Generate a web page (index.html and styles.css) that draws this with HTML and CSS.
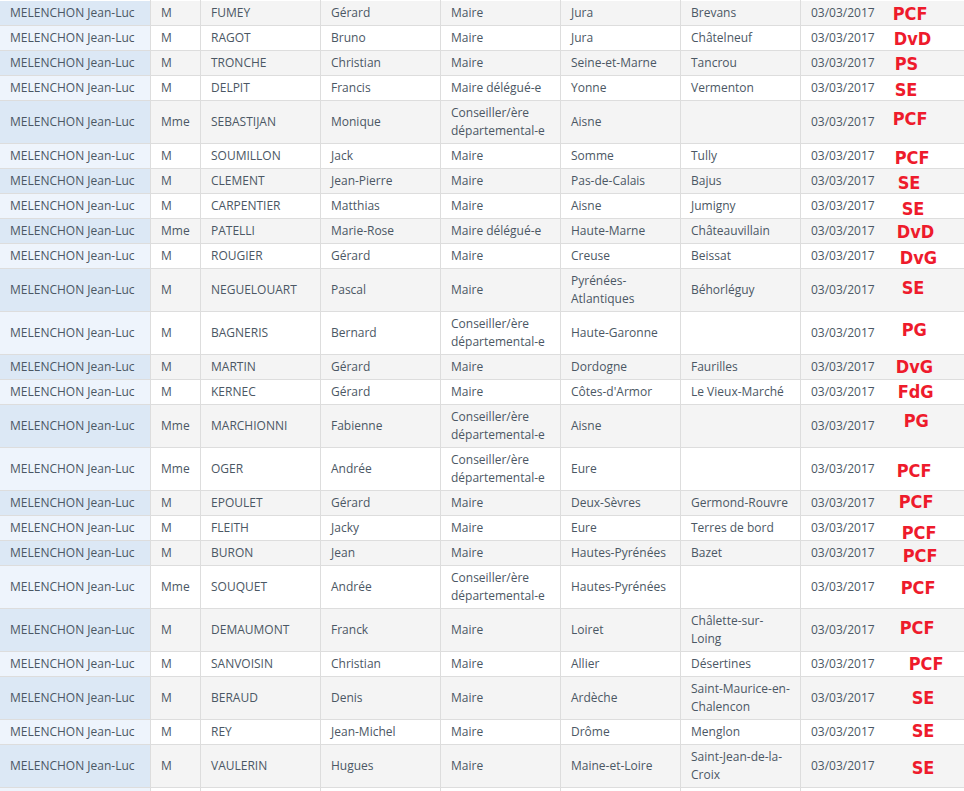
FILE: index.html
```html
<!DOCTYPE html>
<html lang="fr">
<head>
<meta charset="utf-8">
<title>Parrainages</title>
<link rel="stylesheet" href="styles.css">
</head>
<body>
<table class="grid">
<colgroup>
<col class="c-cand"><col class="c-civ"><col class="c-nom"><col class="c-prenom"><col class="c-mandat"><col class="c-dep"><col class="c-com"><col class="c-date">
</colgroup>
<tbody>
<tr><td class="cand">MELENCHON Jean-Luc</td><td>M</td><td>FUMEY</td><td>Gérard</td><td>Maire</td><td>Jura</td><td>Brevans</td><td class="date">03/03/2017<span class="tag" style="--dx:0px;--dy:0px">PCF</span></td></tr>
<tr><td class="cand">MELENCHON Jean-Luc</td><td>M</td><td>RAGOT</td><td>Bruno</td><td>Maire</td><td>Jura</td><td>Châtelneuf</td><td class="date">03/03/2017<span class="tag" style="--dx:1px;--dy:0px">DvD</span></td></tr>
<tr><td class="cand">MELENCHON Jean-Luc</td><td>M</td><td>TRONCHE</td><td>Christian</td><td>Maire</td><td>Seine-et-Marne</td><td>Tancrou</td><td class="date">03/03/2017<span class="tag" style="--dx:2px;--dy:0px">PS</span></td></tr>
<tr><td class="cand">MELENCHON Jean-Luc</td><td>M</td><td>DELPIT</td><td>Francis</td><td>Maire délégué-e</td><td>Yonne</td><td>Vermenton</td><td class="date">03/03/2017<span class="tag" style="--dx:2px;--dy:1px">SE</span></td></tr>
<tr><td class="cand">MELENCHON Jean-Luc</td><td>Mme</td><td>SEBASTIJAN</td><td>Monique</td><td>Conseiller/ère départemental-e</td><td>Aisne</td><td></td><td class="date">03/03/2017<span class="tag" style="--dx:0px;--dy:-4px">PCF</span></td></tr>
<tr><td class="cand">MELENCHON Jean-Luc</td><td>M</td><td>SOUMILLON</td><td>Jack</td><td>Maire</td><td>Somme</td><td>Tully</td><td class="date">03/03/2017<span class="tag" style="--dx:2px;--dy:1px">PCF</span></td></tr>
<tr><td class="cand">MELENCHON Jean-Luc</td><td>M</td><td>CLEMENT</td><td>Jean-Pierre</td><td>Maire</td><td>Pas-de-Calais</td><td>Bajus</td><td class="date">03/03/2017<span class="tag" style="--dx:5px;--dy:1px">SE</span></td></tr>
<tr><td class="cand">MELENCHON Jean-Luc</td><td>M</td><td>CARPENTIER</td><td>Matthias</td><td>Maire</td><td>Aisne</td><td>Jumigny</td><td class="date">03/03/2017<span class="tag" style="--dx:9px;--dy:2px">SE</span></td></tr>
<tr><td class="cand">MELENCHON Jean-Luc</td><td>Mme</td><td>PATELLI</td><td>Marie-Rose</td><td>Maire délégué-e</td><td>Haute-Marne</td><td>Châteauvillain</td><td class="date">03/03/2017<span class="tag" style="--dx:4px;--dy:0px">DvD</span></td></tr>
<tr><td class="cand">MELENCHON Jean-Luc</td><td>M</td><td>ROUGIER</td><td>Gérard</td><td>Maire</td><td>Creuse</td><td>Beissat</td><td class="date">03/03/2017<span class="tag" style="--dx:7px;--dy:1px">DvG</span></td></tr>
<tr><td class="cand">MELENCHON Jean-Luc</td><td>M</td><td>NEGUELOUART</td><td>Pascal</td><td>Maire</td><td>Pyrénées-Atlantiques</td><td>Béhorléguy</td><td class="date">03/03/2017<span class="tag" style="--dx:9px;--dy:-3px">SE</span></td></tr>
<tr><td class="cand">MELENCHON Jean-Luc</td><td>M</td><td>BAGNERIS</td><td>Bernard</td><td>Conseiller/ère départemental-e</td><td>Haute-Garonne</td><td></td><td class="date">03/03/2017<span class="tag" style="--dx:9px;--dy:-4px">PG</span></td></tr>
<tr><td class="cand">MELENCHON Jean-Luc</td><td>M</td><td>MARTIN</td><td>Gérard</td><td>Maire</td><td>Dordogne</td><td>Faurilles</td><td class="date">03/03/2017<span class="tag" style="--dx:3px;--dy:-1px">DvG</span></td></tr>
<tr><td class="cand">MELENCHON Jean-Luc</td><td>M</td><td>KERNEC</td><td>Gérard</td><td>Maire</td><td>Côtes-d'Armor</td><td>Le Vieux-Marché</td><td class="date">03/03/2017<span class="tag" style="--dx:5px;--dy:-1px">FdG</span></td></tr>
<tr><td class="cand">MELENCHON Jean-Luc</td><td>Mme</td><td>MARCHIONNI</td><td>Fabienne</td><td>Conseiller/ère départemental-e</td><td>Aisne</td><td></td><td class="date">03/03/2017<span class="tag" style="--dx:11px;--dy:-6px">PG</span></td></tr>
<tr><td class="cand">MELENCHON Jean-Luc</td><td>Mme</td><td>OGER</td><td>Andrée</td><td>Conseiller/ère départemental-e</td><td>Eure</td><td></td><td class="date">03/03/2017<span class="tag" style="--dx:4px;--dy:1px">PCF</span></td></tr>
<tr><td class="cand">MELENCHON Jean-Luc</td><td>M</td><td>EPOULET</td><td>Gérard</td><td>Maire</td><td>Deux-Sèvres</td><td>Germond-Rouvre</td><td class="date">03/03/2017<span class="tag" style="--dx:6px;--dy:-2px">PCF</span></td></tr>
<tr><td class="cand">MELENCHON Jean-Luc</td><td>M</td><td>FLEITH</td><td>Jacky</td><td>Maire</td><td>Eure</td><td>Terres de bord</td><td class="date">03/03/2017<span class="tag" style="--dx:9px;--dy:4px">PCF</span></td></tr>
<tr><td class="cand">MELENCHON Jean-Luc</td><td>M</td><td>BURON</td><td>Jean</td><td>Maire</td><td>Hautes-Pyrénées</td><td>Bazet</td><td class="date">03/03/2017<span class="tag" style="--dx:10px;--dy:2px">PCF</span></td></tr>
<tr><td class="cand">MELENCHON Jean-Luc</td><td>Mme</td><td>SOUQUET</td><td>Andrée</td><td>Conseiller/ère départemental-e</td><td>Hautes-Pyrénées</td><td></td><td class="date">03/03/2017<span class="tag" style="--dx:8px;--dy:0px">PCF</span></td></tr>
<tr><td class="cand">MELENCHON Jean-Luc</td><td>M</td><td>DEMAUMONT</td><td>Franck</td><td>Maire</td><td>Loiret</td><td>Châlette-sur-Loing</td><td class="date">03/03/2017<span class="tag" style="--dx:7px;--dy:-3px">PCF</span></td></tr>
<tr><td class="cand">MELENCHON Jean-Luc</td><td>M</td><td>SANVOISIN</td><td>Christian</td><td>Maire</td><td>Allier</td><td>Désertines</td><td class="date">03/03/2017<span class="tag" style="--dx:16px;--dy:-1px">PCF</span></td></tr>
<tr><td class="cand">MELENCHON Jean-Luc</td><td>M</td><td>BERAUD</td><td>Denis</td><td>Maire</td><td>Ardèche</td><td>Saint-Maurice-en-Chalencon</td><td class="date">03/03/2017<span class="tag" style="--dx:19px;--dy:-1px">SE</span></td></tr>
<tr><td class="cand">MELENCHON Jean-Luc</td><td>M</td><td>REY</td><td>Jean-Michel</td><td>Maire</td><td>Drôme</td><td>Menglon</td><td class="date">03/03/2017<span class="tag" style="--dx:19px;--dy:-2px">SE</span></td></tr>
<tr><td class="cand">MELENCHON Jean-Luc</td><td>M</td><td>VAULERIN</td><td>Hugues</td><td>Maire</td><td>Maine-et-Loire</td><td>Saint-Jean-de-la-Croix</td><td class="date">03/03/2017<span class="tag" style="--dx:19px;--dy:1px">SE</span></td></tr>
<tr class="edge"><td class="cand"></td><td></td><td></td><td></td><td></td><td></td><td></td><td class="date"></td></tr>
</tbody>
</table>
</body>
</html>
```

FILE: styles.css
```css
html, body {
  margin: 0;
  padding: 0;
  overflow: hidden;
  background: #fff;
}

.grid {
  border-collapse: collapse;
  table-layout: fixed;
  width: 1001px;
  margin-left: -1px;
  font-family: "Open Sans", "Liberation Sans", sans-serif;
  font-size: 12px;
  line-height: 18px;
  color: #4b5764;
}

.c-cand { width: 151px; }
.c-civ { width: 50px; }
.c-nom { width: 120px; }
.c-prenom { width: 120px; }
.c-mandat { width: 120px; }
.c-dep { width: 120px; }
.c-com { width: 120px; }
.c-date { width: 200px; }

.grid td {
  border: 1px solid #dddddd;
  padding: 3px 8px 3px 10px;
  vertical-align: middle;
  background: #ffffff;
}

.grid tr:first-child td {
  border-top-color: transparent;
}

.grid tr:nth-child(odd) td {
  background: #f4f4f4;
}

.grid td.cand {
  background: #eef4fc;
}

.grid tr:nth-child(odd) td.cand {
  background: #dce8f5;
}

.grid tr.edge td {
  height: 18px;
}

.date {
  white-space: nowrap;
}

.tag {
  vertical-align: middle;
  margin-left: 18px;
  position: relative;
  left: var(--dx);
  top: var(--dy);
  font-family: "DejaVu Sans Condensed", "DejaVu Sans", sans-serif;
  font-weight: bold;
  font-size: 18px;
  line-height: 0;
  color: #ee1b2c;
}
```
